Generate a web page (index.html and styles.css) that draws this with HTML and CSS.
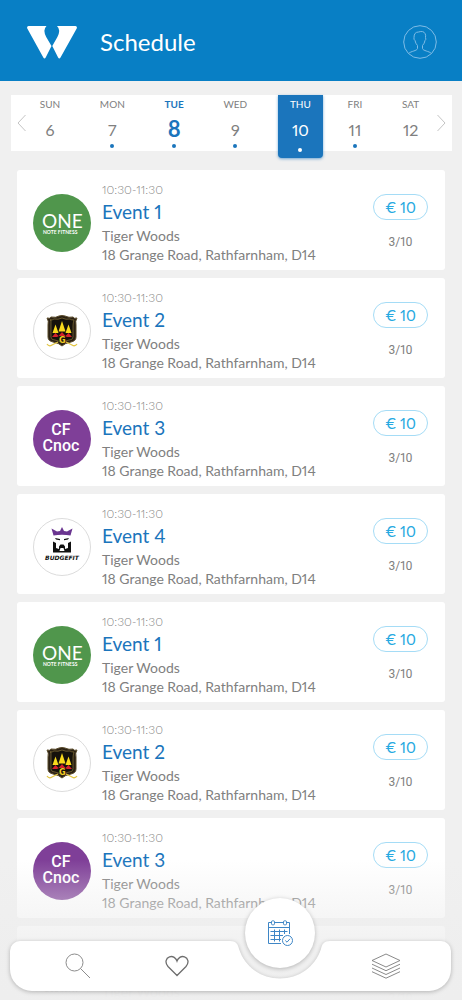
FILE: index.html
```
<!DOCTYPE html>
<html lang="en">
<head>
    <meta charset="UTF-8">
    <meta name="viewport" content="width=device-width, initial-scale=1.0">
    <title>Schedule</title>
    <link rel="stylesheet" href="styles.css">
</head>
<body>
    <!-- Club logos, reused by the cards -->
    <svg class="sprite" aria-hidden="true">
        <symbol id="logo-one" viewBox="0 0 58 58">
            <circle cx="29" cy="29" r="29" fill="#50964c"/>
            <text class="one-text" x="9" y="34" font-size="19" fill="#fff">ONE</text>
            <text class="one-tag" x="10" y="40" font-size="5" fill="#fff">NOTE FITNESS</text>
        </symbol>
        <symbol id="logo-crest" viewBox="0 0 58 58">
            <circle cx="29" cy="29" r="28.500" fill="#fff" stroke="#dcdcdc"/>
            <path d="M14 16q3 1 4-1q5 1 8-1q3-1 6 0q4 2 8 1q1 2 4 1q-2 3-1 7v12q0 4-5 5q-6 1-9 4q-3-3-9-4q-5-1-5-5v-12q1-4-1-7z" fill="#2b2114" stroke="#5b4c2b" stroke-width="1"/>
            <path d="M17 18q3 0 4-1q4 1 8-1q4 2 8 1q1 1 4 1q-1 3-1 6v11q0 3-4 3q-5 1-7 3q-2-2-7-3q-4 0-4-3v-11q0-3 0-6z" fill="#15110b" stroke="#94803f" stroke-width=".6"/>
            <path d="M29 19l-3.500 10.500h7zM22.500 22.500l-3 8.500h6zM35.500 22.500l-3 8.500h6z" fill="#f9da1c"/>
            <path d="M19 35l3.500-4l3 3l3.500-4l3.500 4l3-3l3.500 4h-5l-2-1h-6l-2 1z" fill="#d3222c"/>
            <path d="M14 42q2 3 5 1l6-3M44 42q-2 3-5 1l-6-3" fill="none" stroke="#e2c645" stroke-width="1.300"/>
            <text class="crest-text" x="26" y="41" font-size="8" fill="#f0cc22">G</text>
        </symbol>
        <symbol id="logo-cnoc" viewBox="0 0 58 58">
            <circle cx="29" cy="29" r="29" fill="#7f3f98"/>
            <g class="cnoc-text" fill="#fff" font-size="16" text-anchor="middle">
                <text x="28" y="25">CF</text>
                <text x="28" y="41">Cnoc</text>
            </g>
        </symbol>
        <symbol id="logo-budgefit" viewBox="0 0 58 58">
            <circle cx="29" cy="29" r="28.500" fill="#fff" stroke="#dcdcdc"/>
            <path d="M18.500 10.500l5.500 3l3-.5l2-4l2 4l3 .5l5.500-3l-2 7q-8.500-1.500-17 0z" fill="#6a3590"/>
            <path d="M22 20l5 1v1.300l-4-.8zM36 20l-5 1v1.300l4-.8z" fill="#111"/>
            <path d="M20 23.500l3 1.500v5l3 1v-2.500l1.500-2h3l1.500 2v2.500l3-1v-5l3-1.500v11h-18z" fill="#111"/>
            <path d="M27.500 30h3l1 3h-5z" fill="#fff"/>
            <text class="budgefit-text" x="29" y="42" font-size="6" text-anchor="middle" fill="#111">BUDGEFIT</text>
        </symbol>
    </svg>

    <div class="app">
        <header class="header">
            <svg class="brand" viewBox="0 0 50 33" aria-label="Logo">
                <path d="M1.500 0H19.500Q17.300 2.300 17.400 5Q17.500 8 19.200 11L24.500 20L18.700 31.500Q17.500 33.500 16.300 31.500L.300 2.500Q-.5.300 1.500 0z" fill="#fff"/>
                <path d="M48.500 0H30Q32.300 2.300 32.200 5Q32.100 8 30.400 11L25.300 20L31.100 31.500Q32.300 33.500 33.500 31.500L49.700 2.500Q50.500.300 48.500 0z" fill="#fff"/>
            </svg>
            <h1 class="title">Schedule</h1>
            <button class="profile" aria-label="Profile">
                <svg viewBox="0 0 34 34" fill="none" stroke="#7fbce6">
                    <circle cx="17" cy="17" r="16.300"/>
                    <path d="M5.500 28.500C8 26 14 26 14.500 23.500V20.500Q12.500 18.500 12 15.500Q10.500 14.500 11 12.500Q11 7 15.500 7Q20.500 5.500 22 8.500Q23 10 22.500 12.500Q23.500 14.500 22 15.500Q21.500 18.500 19.500 20.500V23.500C20 26 26 26 28.500 28.500"/>
                </svg>
            </button>
        </header>

        <section class="week">
            <button class="arrow" aria-label="Previous week">
                <svg viewBox="0 0 9 18"><path d="M8.500 1L1 9L8.500 17"/></svg>
            </button>
            <button class="day"><span class="day-name">SUN</span><span class="day-num">6</span></button>
            <button class="day has-event"><span class="day-name">MON</span><span class="day-num">7</span></button>
            <button class="day today has-event"><span class="day-name">TUE</span><span class="day-num">8</span></button>
            <button class="day has-event"><span class="day-name">WED</span><span class="day-num">9</span></button>
            <button class="day selected has-event"><span class="day-name">THU</span><span class="day-num">10</span></button>
            <button class="day has-event"><span class="day-name">FRI</span><span class="day-num">11</span></button>
            <button class="day"><span class="day-name">SAT</span><span class="day-num">12</span></button>
            <button class="arrow" aria-label="Next week">
                <svg viewBox="0 0 9 18"><path d="M.500 1L8 9L.500 17"/></svg>
            </button>
        </section>

        <main class="events">
            <article class="card">
                <svg class="avatar"><use href="#logo-one"/></svg>
                <div class="info">
                    <time class="time">10:30-11:30</time>
                    <h2 class="name">Event 1</h2>
                    <p class="text">Tiger Woods</p>
                    <p class="text">18 Grange Road, Rathfarnham, D14</p>
                </div>
                <div class="booking">
                    <button class="price">€ 10</button>
                    <span class="spots">3/10</span>
                </div>
            </article>
            <article class="card">
                <svg class="avatar"><use href="#logo-crest"/></svg>
                <div class="info">
                    <time class="time">10:30-11:30</time>
                    <h2 class="name">Event 2</h2>
                    <p class="text">Tiger Woods</p>
                    <p class="text">18 Grange Road, Rathfarnham, D14</p>
                </div>
                <div class="booking">
                    <button class="price">€ 10</button>
                    <span class="spots">3/10</span>
                </div>
            </article>
            <article class="card">
                <svg class="avatar"><use href="#logo-cnoc"/></svg>
                <div class="info">
                    <time class="time">10:30-11:30</time>
                    <h2 class="name">Event 3</h2>
                    <p class="text">Tiger Woods</p>
                    <p class="text">18 Grange Road, Rathfarnham, D14</p>
                </div>
                <div class="booking">
                    <button class="price">€ 10</button>
                    <span class="spots">3/10</span>
                </div>
            </article>
            <article class="card">
                <svg class="avatar"><use href="#logo-budgefit"/></svg>
                <div class="info">
                    <time class="time">10:30-11:30</time>
                    <h2 class="name">Event 4</h2>
                    <p class="text">Tiger Woods</p>
                    <p class="text">18 Grange Road, Rathfarnham, D14</p>
                </div>
                <div class="booking">
                    <button class="price">€ 10</button>
                    <span class="spots">3/10</span>
                </div>
            </article>
            <article class="card">
                <svg class="avatar"><use href="#logo-one"/></svg>
                <div class="info">
                    <time class="time">10:30-11:30</time>
                    <h2 class="name">Event 1</h2>
                    <p class="text">Tiger Woods</p>
                    <p class="text">18 Grange Road, Rathfarnham, D14</p>
                </div>
                <div class="booking">
                    <button class="price">€ 10</button>
                    <span class="spots">3/10</span>
                </div>
            </article>
            <article class="card">
                <svg class="avatar"><use href="#logo-crest"/></svg>
                <div class="info">
                    <time class="time">10:30-11:30</time>
                    <h2 class="name">Event 2</h2>
                    <p class="text">Tiger Woods</p>
                    <p class="text">18 Grange Road, Rathfarnham, D14</p>
                </div>
                <div class="booking">
                    <button class="price">€ 10</button>
                    <span class="spots">3/10</span>
                </div>
            </article>
            <article class="card">
                <svg class="avatar"><use href="#logo-cnoc"/></svg>
                <div class="info">
                    <time class="time">10:30-11:30</time>
                    <h2 class="name">Event 3</h2>
                    <p class="text">Tiger Woods</p>
                    <p class="text">18 Grange Road, Rathfarnham, D14</p>
                </div>
                <div class="booking">
                    <button class="price">€ 10</button>
                    <span class="spots">3/10</span>
                </div>
            </article>
            <article class="card">
                <svg class="avatar"><use href="#logo-budgefit"/></svg>
                <div class="info">
                    <time class="time">10:30-11:30</time>
                    <h2 class="name">Event 4</h2>
                    <p class="text">Tiger Woods</p>
                    <p class="text">18 Grange Road, Rathfarnham, D14</p>
                </div>
                <div class="booking">
                    <button class="price">€ 10</button>
                    <span class="spots">3/10</span>
                </div>
            </article>
        </main>

        <div class="footer">
            <nav class="tabs">
                <div class="tabs-left">
                    <a href="#search" aria-label="Search">
                        <svg width="26" height="26" viewBox="0 0 26 26" fill="none" stroke="#8c8c8c">
                            <circle cx="9.500" cy="9.500" r="8.500"/>
                            <path d="M15.500 15.500L25 25"/>
                        </svg>
                    </a>
                    <a href="#favourites" aria-label="Favourites">
                        <svg width="24" height="22" viewBox="0 0 24 22" fill="none" stroke="#6e6e6e" stroke-width="1.300">
                            <path d="M12 20.500L3 11.500C-.500 7.500 1 3 4.500 1.800C8 .600 11 3 12 6C13 3 16 .600 19.500 1.800C23 3 24.500 7.500 21 11.500z"/>
                        </svg>
                    </a>
                </div>
                <div class="notch">
                    <svg width="100" height="50" viewBox="0 0 100 50">
                        <path d="M0 0C6 0 8 3 9 8C15 26 31 37.500 50 37.500C69 37.500 85 26 91 8C92 3 94 0 100 0V50H0z" fill="#fff"/>
                    </svg>
                    <a class="current" href="#schedule" aria-label="Schedule">
                        <svg width="26" height="26" viewBox="0 0 26 26" fill="none" stroke="#3e86c6">
                            <path d="M4 2.500H1.500V23.500H14M7.500 2.500H16M19.500 2.500H22.500V14M1.500 7.500H22.500"/>
                            <rect x="4.500" y=".800" width="3" height="4" rx="1"/>
                            <rect x="16.500" y=".800" width="3" height="4" rx="1"/>
                            <path d="M3.500 11.500H20.500M3.500 15.500H16M3.500 19.500H14M7.500 9.500V21.500M12.500 9.500V21.500M17.500 9.500V14"/>
                            <circle cx="20.500" cy="20.500" r="5"/>
                            <path d="M18.300 20.500L20 22.200L23 18.800"/>
                        </svg>
                    </a>
                </div>
                <div class="tabs-right">
                    <a href="#classes" aria-label="Classes">
                        <svg width="30" height="26" viewBox="0 0 30 26" fill="none" stroke="#7c7c7c" stroke-width=".9">
                            <path d="M15 1L29 7.500L15 14L1 7.500zM1 11.200L15 17.700L29 11.200M1 15L15 21.500L29 15M1 18.700L15 25.200L29 18.700"/>
                        </svg>
                    </a>
                </div>
            </nav>
        </div>
    </div>
</body>
</html>
```
FILE: styles.css
```
* {
    box-sizing: border-box;
}

body {
    margin: 0;
    background-color: #f0f0f0;
    color: #808080;
    font-family: Lato, "Open Sans", sans-serif;
    font-variant-numeric: proportional-nums;
}

h1, h2, p {
    margin: 0;
}

button {
    padding: 0;
    border: none;
    background: none;
    color: inherit;
    font: inherit;
    font-variant-numeric: proportional-nums;
    cursor: pointer;
}

svg {
    display: block;
}

.sprite {
    display: none;
}

.app {
    position: relative;
    display: flex;
    flex-direction: column;
    height: 100vh;
    overflow: hidden;
}

/* Header */
.header {
    display: flex;
    align-items: center;
    flex-shrink: 0;
    height: 81px;
    padding: 3px 25px 0 27px;
    background-color: #087fc5;
}

.brand {
    width: 50px;
    height: 33px;
}

.title {
    margin-left: 23px;
    color: #fff;
    font-size: 24px;
    font-weight: 400;
    line-height: 32px;
}

.profile {
    width: 34px;
    height: 34px;
    margin-left: auto;
}

/* Week strip */
.week {
    display: flex;
    justify-content: space-between;
    flex-shrink: 0;
    height: 56px;
    margin: 14px 10px 0 11px;
    padding: 0 6px;
    background-color: #fff;
}

.arrow {
    width: 9px;
}

.arrow svg {
    width: 9px;
    height: 18px;
    fill: none;
    stroke: #c4c4c4;
}

.arrow:first-child {
    margin-right: -26px;
}

.arrow:last-child {
    margin-left: -22px;
}

.day {
    display: flex;
    flex-direction: column;
    align-items: center;
    height: 56px;
}

.day-name {
    margin-top: 2px;
    font-size: 10px;
    line-height: 14px;
}

.day-num {
    margin-top: 9px;
    font-size: 16px;
    line-height: 20px;
}

.has-event::after {
    content: "";
    width: 4px;
    height: 4px;
    margin-top: 4px;
    border-radius: 50%;
    background-color: #1b75bc;
}

.today {
    color: #1b75bc;
    font-weight: 700;
}

.today .day-num {
    margin-top: 7px;
    font-size: 22px;
    line-height: 22px;
}

.selected {
    height: 63px;
    margin: 0 -15px 0 -9px;
    padding: 0 12px;
    border-radius: 0 0 4px 4px;
    background-color: #1b75bc;
    box-shadow: 0 1px 3px rgba(27, 117, 188, 0.6);
    color: #fff;
}

.selected::after {
    margin-top: 8px;
    background-color: #fff;
}

/* Event cards */
.events {
    display: flex;
    flex-direction: column;
    flex: 1;
    gap: 8px;
    min-height: 0;
    margin-top: 19px;
    padding: 0 17px;
    overflow-y: auto;
    scrollbar-width: none;
}

.card {
    display: flex;
    flex-shrink: 0;
    padding: 12px 17px 6px 16px;
    border-radius: 3px;
    background-color: #fff;
}

.avatar {
    flex-shrink: 0;
    width: 58px;
    height: 58px;
    margin-top: 12px;
}

.info {
    flex: 1;
    margin-left: 11px;
}

.time {
    display: block;
    font-size: 12px;
    font-weight: 300;
    line-height: 16px;
}

.name {
    color: #1b75bc;
    font-size: 19px;
    font-weight: 400;
    line-height: 28px;
}

.text {
    font-size: 14px;
    line-height: 19px;
}

.booking {
    display: flex;
    flex-direction: column;
    align-items: center;
    padding-top: 12px;
}

.price {
    width: 55px;
    height: 26px;
    border: 1px solid #a5dcf6;
    border-radius: 13px;
    color: #27a9e1;
    font-size: 15px;
    line-height: 24px;
}

.spots {
    margin-top: 14px;
    font-family: Roboto, sans-serif;
    font-size: 12px;
    line-height: 16px;
}

/* Logo lettering */
.one-text {
    font-family: Lato, sans-serif;
}

.one-tag {
    font-family: Lato, sans-serif;
    font-weight: 700;
}

.crest-text {
    font-family: "DejaVu Sans", sans-serif;
    font-weight: 700;
}

.cnoc-text {
    font-family: Roboto, sans-serif;
    font-weight: 500;
}

.budgefit-text {
    font-family: "DejaVu Sans", sans-serif;
    font-style: italic;
    font-weight: 700;
}

/* Bottom tabs, list fades out underneath */
.footer {
    position: absolute;
    right: 0;
    bottom: 0;
    left: 0;
    padding: 81px 11px 9px 10px;
    background: linear-gradient(rgba(238, 238, 238, 0), rgba(238, 238, 238, 0.8) 60%, #eee);
    pointer-events: none;
}

.tabs {
    display: grid;
    grid-template-columns: 220fr 100px 121fr;
    height: 50px;
    filter: drop-shadow(0 1px 2px rgba(0, 0, 0, 0.25));
    pointer-events: auto;
}

.tabs-left,
.tabs-right {
    display: flex;
    align-items: center;
    background-color: #fff;
}

.tabs-left {
    justify-content: space-between;
    padding: 0 41px 0 55px;
    border-radius: 10px 0 0 22px;
}

.tabs-right {
    justify-content: center;
    padding-right: 10px;
    border-radius: 0 10px 22px 0;
}

.notch {
    position: relative;
}

.current {
    position: absolute;
    top: -43px;
    left: 15px;
    display: flex;
    align-items: center;
    justify-content: center;
    width: 70px;
    height: 70px;
    border-radius: 50%;
    background-color: #fff;
}
```
